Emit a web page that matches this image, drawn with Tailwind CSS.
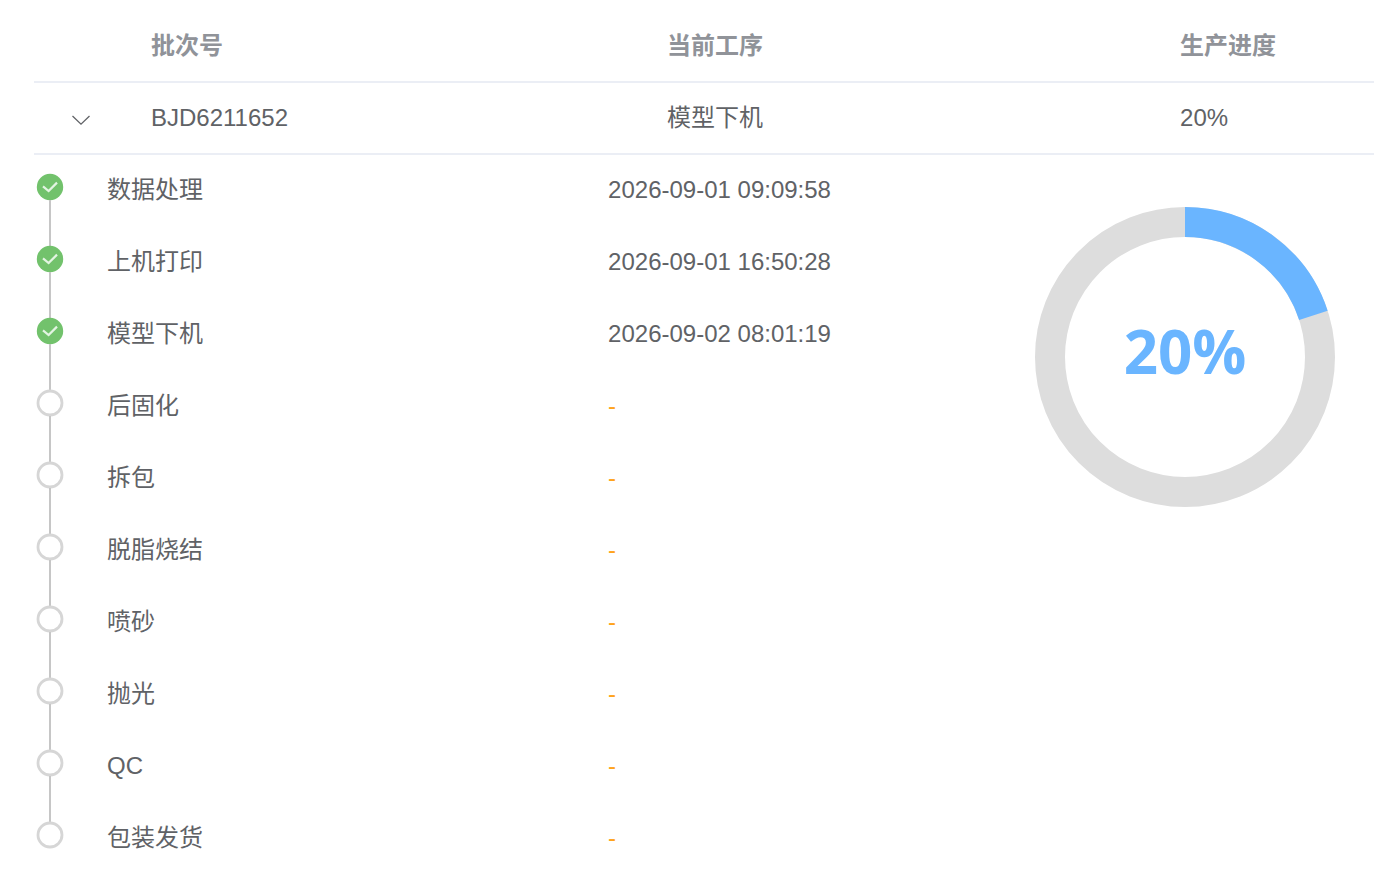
<!DOCTYPE html>
<html lang="zh-CN">
<head>
  <meta charset="UTF-8">
  <meta name="viewport" content="width=device-width, initial-scale=1.0">
  <title>生产进度</title>
  <script src="https://cdn.jsdelivr.net/npm/@tailwindcss/browser@4"></script>
</head>
<body class="bg-white pt-[11px] pl-[34px] font-['Liberation_Sans','Noto_Sans_CJK_SC',sans-serif] text-2xl text-[#606266]">
  <!-- Shared icons -->
  <svg class="hidden">
    <symbol id="done" viewBox="0 0 28 28">
      <circle cx="14" cy="14" r="13.2" fill="#72c26c"/>
      <path d="M7 13.300l5.600 4.700 8.400-8.400" fill="none" stroke="#e3f4e2" stroke-width="2.2"/>
    </symbol>
    <symbol id="todo" viewBox="0 0 28 28">
      <circle cx="14" cy="14" r="12" fill="#fff" stroke="#d6d6d6" stroke-width="2.8"/>
    </symbol>
  </svg>

  <table class="w-full table-fixed border-separate border-spacing-0 text-left">
    <colgroup>
      <col class="w-[97px]">
      <col class="w-[38.5%]">
      <col class="w-[38.3%]">
      <col>
    </colgroup>
    <thead class="text-[#909399]">
      <tr class="h-18">
        <th class="border-b-2 border-[#ebeef5]"></th>
        <th class="border-b-2 border-[#ebeef5] pl-5 font-bold">批次号</th>
        <th class="border-b-2 border-[#ebeef5] pl-5 font-bold">当前工序</th>
        <th class="border-b-2 border-[#ebeef5] pl-5 font-bold">生产进度</th>
      </tr>
    </thead>
    <tbody>
      <tr class="h-18">
        <td class="border-b-2 border-[#ebeef5]">
          <button type="button" id="toggle" aria-label="展开" aria-expanded="true" aria-controls="detail" class="ml-[31px] flex size-8 cursor-pointer items-center justify-center pt-1">
            <svg viewBox="0 0 20 12" class="h-3 w-5" fill="none" stroke="#606266" stroke-width="1.3"><path d="M1.500 2L10 10.200l8.500-8.200"/></svg>
          </button>
        </td>
        <td class="border-b-2 border-[#ebeef5] pl-5">BJD6211652</td>
        <td class="border-b-2 border-[#ebeef5] pl-5">模型下机</td>
        <td class="border-b-2 border-[#ebeef5] pl-5">20%</td>
      </tr>
      <tr id="detail">
        <td colspan="4">
          <div class="flex items-start">
            <!-- Steps -->
            <ol class="flex-1">
              <li class="flex h-18">
                <div class="flex w-8 shrink-0 flex-col items-center pt-[18px]"><svg class="size-7 shrink-0"><use href="#done"/></svg><span class="-mt-px -mb-[19px] w-0.5 flex-1 bg-[#c6c6c6]"></span></div>
                <div class="flex flex-1 items-center pl-[41px] pb-0.5"><span class="w-[54%] min-w-40">数据处理</span><time>2026-09-01 09:09:58</time></div>
              </li>
              <li class="flex h-18">
                <div class="flex w-8 shrink-0 flex-col items-center pt-[18px]"><svg class="size-7 shrink-0"><use href="#done"/></svg><span class="-mt-px -mb-[19px] w-0.5 flex-1 bg-[#c6c6c6]"></span></div>
                <div class="flex flex-1 items-center pl-[41px] pb-0.5"><span class="w-[54%] min-w-40">上机打印</span><time>2026-09-01 16:50:28</time></div>
              </li>
              <li class="flex h-18">
                <div class="flex w-8 shrink-0 flex-col items-center pt-[18px]"><svg class="size-7 shrink-0"><use href="#done"/></svg><span class="-mt-px -mb-[19px] w-0.5 flex-1 bg-[#c6c6c6]"></span></div>
                <div class="flex flex-1 items-center pl-[41px] pb-0.5"><span class="w-[54%] min-w-40">模型下机</span><time>2026-09-02 08:01:19</time></div>
              </li>
              <li class="flex h-18">
                <div class="flex w-8 shrink-0 flex-col items-center pt-[18px]"><svg class="size-7 shrink-0"><use href="#todo"/></svg><span class="-mt-px -mb-[19px] w-0.5 flex-1 bg-[#c6c6c6]"></span></div>
                <div class="flex flex-1 items-center pl-[41px] pb-0.5"><span class="w-[54%] min-w-40">后固化</span><span class="text-[#ffa41c]">-</span></div>
              </li>
              <li class="flex h-18">
                <div class="flex w-8 shrink-0 flex-col items-center pt-[18px]"><svg class="size-7 shrink-0"><use href="#todo"/></svg><span class="-mt-px -mb-[19px] w-0.5 flex-1 bg-[#c6c6c6]"></span></div>
                <div class="flex flex-1 items-center pl-[41px] pb-0.5"><span class="w-[54%] min-w-40">拆包</span><span class="text-[#ffa41c]">-</span></div>
              </li>
              <li class="flex h-18">
                <div class="flex w-8 shrink-0 flex-col items-center pt-[18px]"><svg class="size-7 shrink-0"><use href="#todo"/></svg><span class="-mt-px -mb-[19px] w-0.5 flex-1 bg-[#c6c6c6]"></span></div>
                <div class="flex flex-1 items-center pl-[41px] pb-0.5"><span class="w-[54%] min-w-40">脱脂烧结</span><span class="text-[#ffa41c]">-</span></div>
              </li>
              <li class="flex h-18">
                <div class="flex w-8 shrink-0 flex-col items-center pt-[18px]"><svg class="size-7 shrink-0"><use href="#todo"/></svg><span class="-mt-px -mb-[19px] w-0.5 flex-1 bg-[#c6c6c6]"></span></div>
                <div class="flex flex-1 items-center pl-[41px] pb-0.5"><span class="w-[54%] min-w-40">喷砂</span><span class="text-[#ffa41c]">-</span></div>
              </li>
              <li class="flex h-18">
                <div class="flex w-8 shrink-0 flex-col items-center pt-[18px]"><svg class="size-7 shrink-0"><use href="#todo"/></svg><span class="-mt-px -mb-[19px] w-0.5 flex-1 bg-[#c6c6c6]"></span></div>
                <div class="flex flex-1 items-center pl-[41px] pb-0.5"><span class="w-[54%] min-w-40">抛光</span><span class="text-[#ffa41c]">-</span></div>
              </li>
              <li class="flex h-18">
                <div class="flex w-8 shrink-0 flex-col items-center pt-[18px]"><svg class="size-7 shrink-0"><use href="#todo"/></svg><span class="-mt-px -mb-[19px] w-0.5 flex-1 bg-[#c6c6c6]"></span></div>
                <div class="flex flex-1 items-center pl-[41px] pb-0.5"><span class="w-[54%] min-w-40">QC</span><span class="text-[#ffa41c]">-</span></div>
              </li>
              <li class="flex h-18">
                <div class="flex w-8 shrink-0 flex-col items-center pt-[18px]"><svg class="size-7 shrink-0"><use href="#todo"/></svg></div>
                <div class="flex flex-1 items-center pl-[41px] pb-0.5"><span class="w-[54%] min-w-40">包装发货</span><span class="text-[#ffa41c]">-</span></div>
              </li>
            </ol>
            <!-- Progress ring -->
            <div class="mt-[52px] mr-[39px] grid size-[300px] shrink-0 place-items-center">
              <svg viewBox="0 0 300 300" class="col-start-1 row-start-1 size-full -rotate-90" fill="none" stroke-width="30">
                <circle cx="150" cy="150" r="135" stroke="#ddd"/>
                <circle cx="150" cy="150" r="135" stroke="#6ab5ff" pathLength="100" stroke-dasharray="20 80"/>
              </svg>
              <span class="col-start-1 row-start-1 pb-3 font-['Open_Sans',sans-serif] text-6xl font-bold text-[#6ab5ff]">20%</span>
            </div>
          </div>
        </td>
      </tr>
    </tbody>
  </table>

  <script>
    const toggle = document.getElementById('toggle');
    toggle.addEventListener('click', () => {
      const hidden = document.getElementById('detail').classList.toggle('hidden');
      toggle.setAttribute('aria-expanded', String(!hidden));
    });
  </script>
</body>
</html>
